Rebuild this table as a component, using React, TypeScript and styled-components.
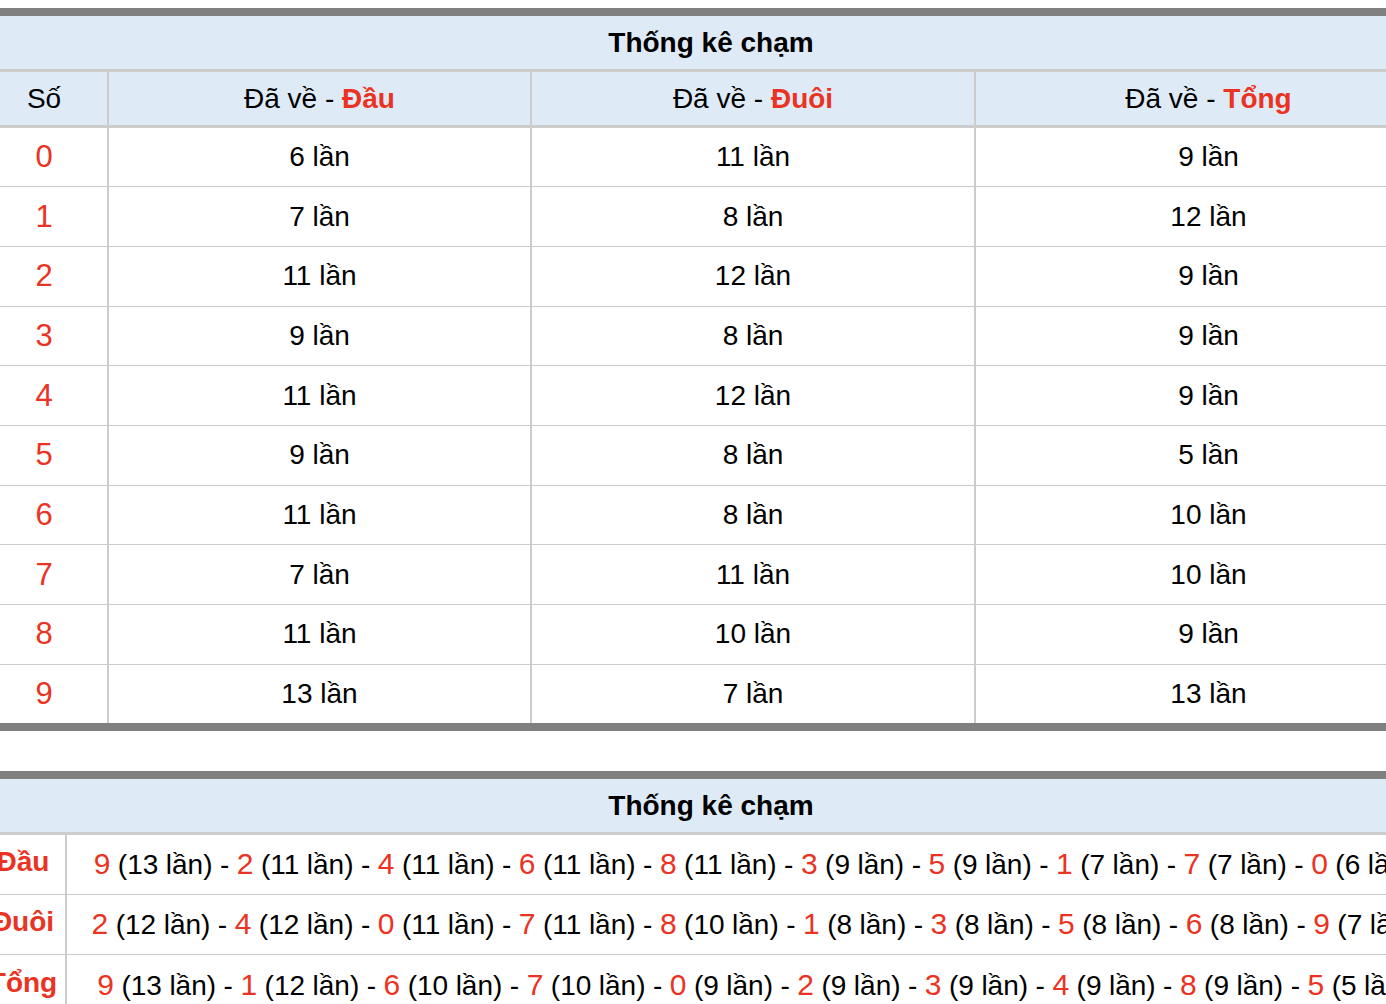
import React from "react";
import styled, { createGlobalStyle } from "styled-components";

const GlobalStyle = createGlobalStyle`
  html, body {
    margin: 0;
    padding: 0;
    background: #ffffff;
  }
  body {
    font-family: "Liberation Sans", Arial, Helvetica, sans-serif;
    color: #000000;
    overflow: hidden;
  }
`;

const RED = "#ea3323";
const HEAD_BG = "#deebf6";
const LINE = "#cccccc";
const THICK = "#808080";

const Page = styled.div`
  width: 1386px;
  padding-top: 8px;
  overflow: hidden;
`;

const Wrapper = styled.div`
  margin-left: -19px;
  width: 1460px;
  display: flex;
  flex-direction: column;
  gap: 40px;
`;

const Board = styled.section<{ $closed?: boolean }>`
  border-top: 8px solid ${THICK};
  border-bottom: ${(p) => (p.$closed ? `8px solid ${THICK}` : "none")};
`;

const Title = styled.div`
  box-sizing: border-box;
  height: 55.8px;
  padding-top: 2px;
  background: ${HEAD_BG};
  border-bottom: 3.5px solid ${LINE};
  display: flex;
  align-items: center;
  justify-content: center;
  font-size: 28px;
  font-weight: 700;
`;

const Grid = styled.div<{ $cols: string }>`
  display: grid;
  grid-template-columns: ${(p) => p.$cols};
`;

const HeadCell = styled.div<{ $first?: boolean }>`
  box-sizing: border-box;
  height: 55.8px;
  padding-top: 2px;
  background: ${HEAD_BG};
  border-bottom: 3.5px solid ${LINE};
  border-left: ${(p) => (p.$first ? "none" : `2px solid ${LINE}`)};
  display: flex;
  align-items: center;
  justify-content: center;
  font-size: 28px;
  white-space: nowrap;
`;

const Accent = styled.b`
  color: ${RED};
  font-weight: 700;
`;

const Cell = styled.div<{ $first?: boolean; $last?: boolean; $h: number }>`
  box-sizing: border-box;
  height: ${(p) => p.$h}px;
  border-bottom: ${(p) => (p.$last ? "none" : `1.75px solid ${LINE}`)};
  border-left: ${(p) => (p.$first ? "none" : `2px solid ${LINE}`)};
  display: flex;
  align-items: center;
  justify-content: center;
  font-size: 28px;
  white-space: nowrap;
`;

const Digit = styled.span<{ $big?: boolean }>`
  color: ${RED};
  font-size: ${(p) => (p.$big ? 31 : 30)}px;
`;

const Label = styled.span`
  color: ${RED};
  font-size: 28px;
  font-weight: 700;
  margin-top: -4px;
`;

const Seq = styled.span`
  font-size: 28px;
  word-spacing: -0.3px;
`;

const dau = [6, 7, 11, 9, 11, 9, 11, 7, 11, 13];
const duoi = [11, 8, 12, 8, 12, 8, 8, 11, 10, 7];
const tong = [9, 12, 9, 9, 9, 5, 10, 10, 9, 13];

const sortCounts = (arr: number[]) =>
  arr
    .map((c, d) => ({ d, c }))
    .sort((a, b) => b.c - a.c || a.d - b.d);

const summary = [
  { label: "Đầu", items: sortCounts(dau) },
  { label: "Đuôi", items: sortCounts(duoi) },
  { label: "Tổng", items: sortCounts(tong) },
];

export default function App() {
  return (
    <>
      <GlobalStyle />
      <Page>
        <Wrapper>
          <Board $closed>
            <Title>Thống kê chạm</Title>
            <Grid $cols="126px 423px 444px 467px">
              <HeadCell $first>Số</HeadCell>
              <HeadCell>
                Đã về -&nbsp;<Accent>Đầu</Accent>
              </HeadCell>
              <HeadCell>
                Đã về -&nbsp;<Accent>Đuôi</Accent>
              </HeadCell>
              <HeadCell>
                Đã về -&nbsp;<Accent>Tổng</Accent>
              </HeadCell>
              {dau.map((_, i) => {
                const last = i === dau.length - 1;
                const h = last ? 57.95 : 59.7;
                return (
                  <React.Fragment key={i}>
                    <Cell $first $last={last} $h={h}>
                      <Digit $big>{i}</Digit>
                    </Cell>
                    <Cell $last={last} $h={h}>{dau[i]} lần</Cell>
                    <Cell $last={last} $h={h}>{duoi[i]} lần</Cell>
                    <Cell $last={last} $h={h}>{tong[i]} lần</Cell>
                  </React.Fragment>
                );
              })}
            </Grid>
          </Board>
          <Board>
            <Title>Thống kê chạm</Title>
            <Grid $cols="84px 1376px">
              {summary.map((row, i) => (
                <React.Fragment key={row.label}>
                  <Cell $first $h={60.25} $last={i === summary.length - 1}>
                    <Label>{row.label}</Label>
                  </Cell>
                  <Cell $h={60.25} $last={i === summary.length - 1}>
                    <Seq>
                      {row.items.map((it, k) => (
                        <React.Fragment key={it.d}>
                          {k > 0 ? " - " : ""}
                          <Digit>{it.d}</Digit> ({it.c} lần)
                        </React.Fragment>
                      ))}
                    </Seq>
                  </Cell>
                </React.Fragment>
              ))}
            </Grid>
          </Board>
        </Wrapper>
      </Page>
    </>
  );
}
